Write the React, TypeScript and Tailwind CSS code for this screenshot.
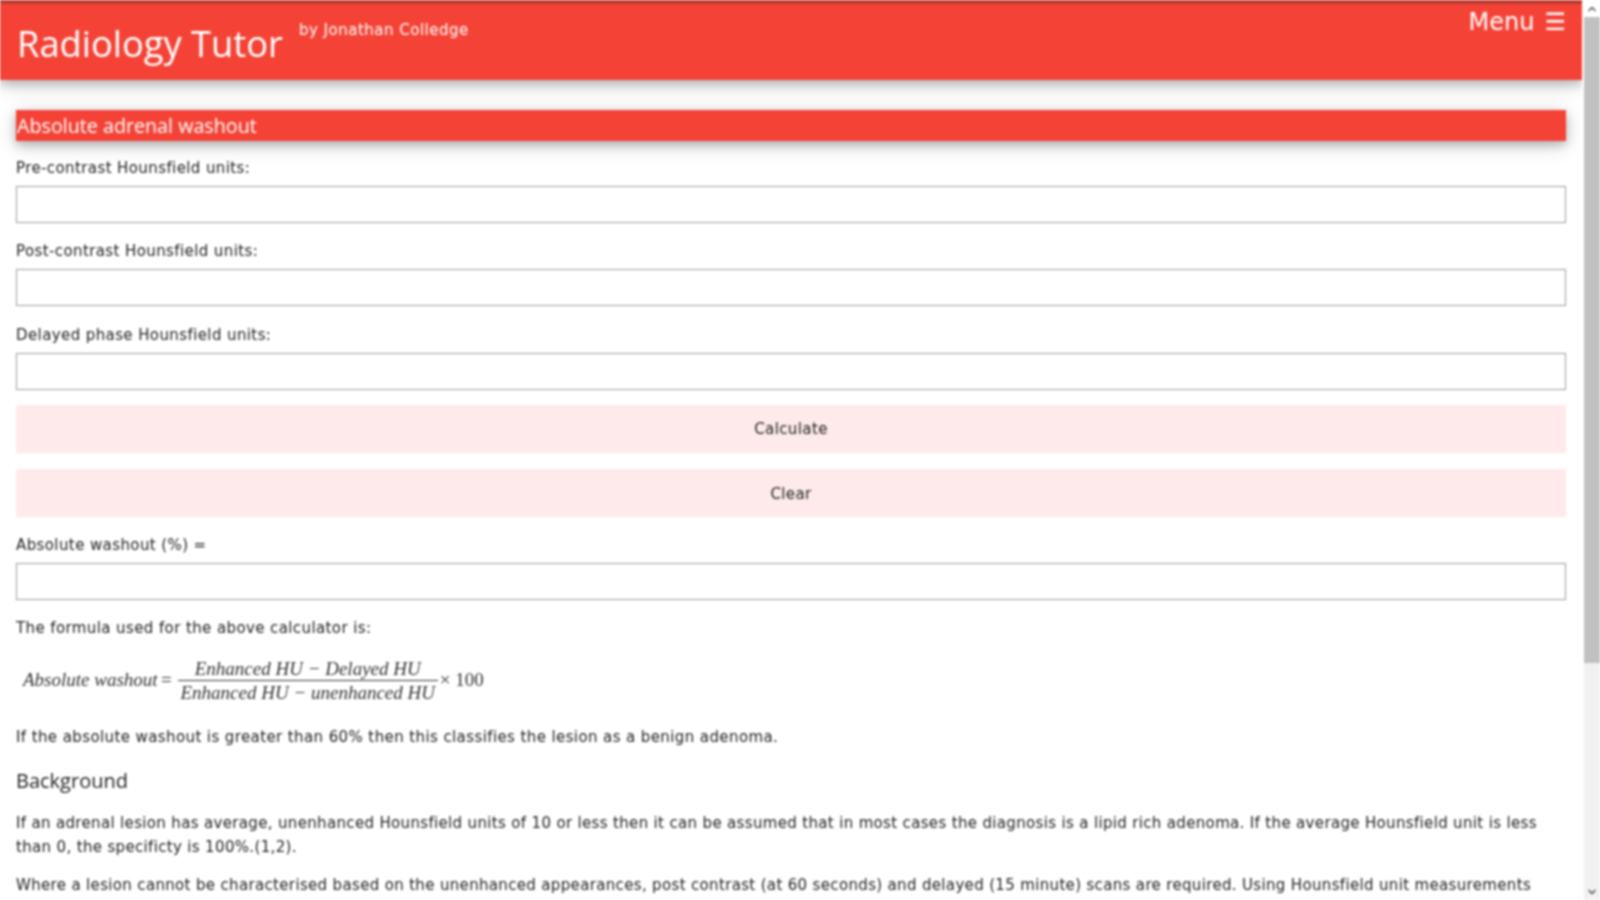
import { ChevronUp, ChevronDown } from "lucide-react"

const body = "font-['DejaVu_Sans',Verdana,sans-serif] text-[15px] tracking-[0.4px] text-[#222]"

function Field({ label, className }: { label: string; className: string }) {
  return (
    <div className={className}>
      <label className="block h-[18px] leading-[18px]">{label}</label>
      <input className="block w-full h-[37px] mt-[9px] bg-white border border-[#9a9a9a] outline-none" />
    </div>
  )
}

function Formula() {
  return (
    <div className="flex items-center h-[56px] mt-[15px] ml-[7px] font-['Liberation_Serif',serif] text-[19px] tracking-normal text-[#333]">
      <i className="w-[135px]">Absolute washout</i>
      <span className="ml-[3px] mr-[6px]">=</span>
      <div className="flex flex-col items-center">
        <i className="leading-[23px] border-b border-[#333] w-[260px] text-center">Enhanced HU − Delayed HU</i>
        <i className="leading-[23px]">Enhanced HU − unenhanced HU</i>
      </div>
      <span className="ml-[2px]">× 100</span>
    </div>
  )
}

export default function App() {
  return (
    <div className="flex h-[900px] overflow-hidden bg-white blur-[0.8px]">
      <div className={`flex-1 min-w-0 overflow-hidden ${body}`}>
        <header className="flex justify-between h-[80px] border-t-4 border-[#bd3a32] bg-[#f44336] text-white pl-[17px] pr-[16px] shadow-[0_4px_10px_0_rgba(0,0,0,0.2),0_4px_20px_0_rgba(0,0,0,0.19)]">
          <div className="flex items-start">
            <h1 className="text-[36.3px] tracking-normal leading-[50px] mt-[14px] font-['Open_Sans',sans-serif]">Radiology Tutor</h1>
            <span className="tracking-[0.5px] leading-[20px] ml-[16px] mt-[16px]">by Jonathan Colledge</span>
          </div>
          <div className="flex items-start text-[24px] tracking-normal leading-[30px] mt-[3px]">
            Menu <span className="ml-[10px]">☰</span>
          </div>
        </header>

        <main className="px-[16px] pt-[30px]">
          <h2 className="h-[31px] leading-[31px] pl-px bg-[#f44336] text-white text-[19.7px] tracking-normal font-['Open_Sans',sans-serif] shadow-[0_4px_10px_0_rgba(0,0,0,0.2),0_4px_20px_0_rgba(0,0,0,0.19)]">
            Absolute adrenal washout
          </h2>
          <Field label="Pre-contrast Hounsfield units:" className="mt-[18px]" />
          <Field label="Post-contrast Hounsfield units:" className="mt-[19px]" />
          <Field label="Delayed phase Hounsfield units:" className="mt-[20px]" />
          <button className="block w-full h-[48px] mt-[15px] bg-[#feeaea] text-center">Calculate</button>
          <button className="block w-full h-[48px] mt-[16px] pt-[3px] bg-[#feeaea] text-center">Clear</button>
          <Field label="Absolute washout (%) =" className="mt-[19px]" />
          <p className="mt-[19px] leading-[18px]">The formula used for the above calculator is:</p>
          <Formula />
          <p className="mt-[20px] leading-[18px]">If the absolute washout is greater than 60% then this classifies the lesion as a benign adenoma.</p>
          <h3 className="mt-[21px] leading-[28px] text-[20px] tracking-normal font-['Open_Sans',sans-serif]">Background</h3>
          <p className="mt-[16px] leading-[24px] tracking-[0.34px]">
            If an adrenal lesion has average, unenhanced Hounsfield units of 10 or less then it can be assumed that in most cases the diagnosis is a lipid rich adenoma. If the average Hounsfield unit is less than 0, the specificty is 100%.(1,2).
          </p>
          <p className="mt-[14px] leading-[24px] tracking-[0.34px]">
            Where a lesion cannot be characterised based on the unenhanced appearances, post contrast (at 60 seconds) and delayed (15 minute) scans are required. Using Hounsfield unit measurements
          </p>
        </main>
      </div>

      <div className="flex flex-col w-[16px] ml-[2px] shrink-0 bg-[#f1f1f1]">
        <div className="flex items-center justify-center h-[17px] bg-white text-[#555]">
          <ChevronUp size={12} strokeWidth={3} />
        </div>
        <div className="h-[646px] bg-[#c1c1c1]" />
        <div className="flex-1" />
        <div className="flex items-center justify-center h-[17px] text-[#555]">
          <ChevronDown size={12} strokeWidth={3} />
        </div>
      </div>
    </div>
  )
}
